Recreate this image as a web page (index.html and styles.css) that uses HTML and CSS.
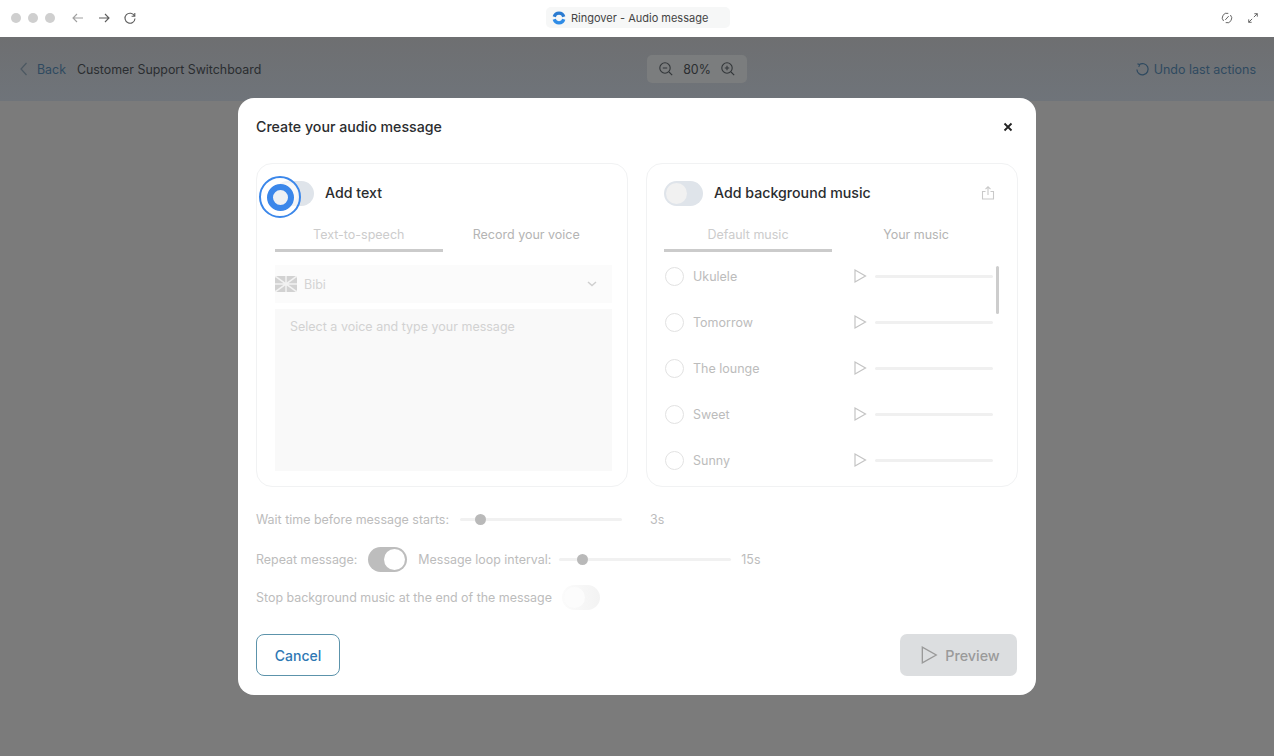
FILE: index.html
```html
<!DOCTYPE html>
<html lang="en">
<head>
    <meta charset="UTF-8">
    <meta name="viewport" content="width=device-width, initial-scale=1.0">
    <title>Ringover - Audio message</title>
    <link rel="stylesheet" href="styles.css">
</head>
<body>
    <!-- Window title bar -->
    <div class="titlebar">
        <div class="window-controls">
            <span class="dot"></span><span class="dot"></span><span class="dot"></span>
            <svg class="nav-icon faint" viewBox="0 0 14 14"><path d="M12 7H2M6 3 2 7l4 4"/></svg>
            <svg class="nav-icon" viewBox="0 0 14 14"><path d="M2 7h10M8 3l4 4-4 4"/></svg>
            <svg class="nav-icon" viewBox="0 0 14 14"><path d="M11.500 5A5 5 0 1 0 12 7.500M11.800 2v3.200H8.600"/></svg>
        </div>
        <div class="tab-pill">
            <svg class="app-logo" viewBox="0 0 14 14">
                <path class="logo-dark" d="M2.200 5.800A5 5 0 0 1 11.800 5.800"/>
                <path class="logo-light" d="M2.200 8.200A5 5 0 0 0 11.800 8.200"/>
            </svg>
            <span>Ringover - Audio message</span>
        </div>
        <div class="window-actions">
            <svg class="nav-icon" viewBox="0 0 14 14"><path d="M8.500 1.600A5.400 5.400 0 0 0 3 10.500M5.500 12.400A5.400 5.400 0 0 0 11 3.500M9 4.800 5 9.200"/></svg>
            <svg class="nav-icon" viewBox="0 0 14 14"><path d="M8 6l4-4M8.600 2H12v3.400M6 8l-4 4M2 8.600V12h3.400"/></svg>
        </div>
    </div>

    <div class="app">
        <!-- Page header behind the dialog -->
        <header class="page-header">
            <div class="header-left">
                <svg class="back-icon" viewBox="0 0 10 16"><path d="M7.500 2 2 8l5.500 6"/></svg>
                <span class="back-link">Back</span>
                <span class="page-title">Customer Support Switchboard</span>
            </div>
            <div class="zoom-box">
                <svg class="zoom-icon" viewBox="0 0 16 16"><circle cx="7" cy="7" r="5.200"/><path d="M4.800 7h4.400M11 11l3.200 3.200"/></svg>
                <span>80%</span>
                <svg class="zoom-icon" viewBox="0 0 16 16"><circle cx="7" cy="7" r="5.200"/><path d="M4.800 7h4.400M7 4.800v4.400M11 11l3.200 3.200"/></svg>
            </div>
            <div class="undo-link">
                <svg class="undo-icon" viewBox="0 0 16 16"><path d="M4.500 2.800A6 6 0 1 1 2 8M2.600 1.800l2.400 1-1 2.400"/></svg>
                <span>Undo last actions</span>
            </div>
        </header>

        <!-- Audio message dialog -->
        <div class="overlay">
            <div class="modal">
                <div class="modal-head">
                    <h2>Create your audio message</h2>
                    <svg class="close-icon" viewBox="0 0 10 10"><path d="M1.500 1.500l7 7M8.500 1.500l-7 7"/></svg>
                </div>

                <div class="panels">
                    <section class="panel panel-text">
                        <div class="panel-head">
                            <span class="toggle toggle-blue"><span class="knob"></span></span>
                            <span class="panel-label">Add text</span>
                            <span class="focus-ring"><span class="focus-core"></span></span>
                        </div>
                        <div class="tabs">
                            <span class="tab active">Text-to-speech</span>
                            <span class="tab">Record your voice</span>
                        </div>
                        <div class="voice-select">
                            <svg class="flag" viewBox="0 0 22 16"><rect width="22" height="16" rx="2" fill="#d2d2d2"/><path d="M0 8h22M11 0v16M0 0l22 16M22 0 0 16" stroke="#f2f2f2" stroke-width="1.500"/></svg>
                            <span>Bibi</span>
                            <svg class="chevron" viewBox="0 0 10 6"><path d="M1 1l4 3.500L9 1"/></svg>
                        </div>
                        <div class="message-box">Select a voice and type your message</div>
                    </section>

                    <section class="panel">
                        <div class="panel-head">
                            <span class="toggle toggle-blue"><span class="knob"></span></span>
                            <span class="panel-label">Add background music</span>
                            <svg class="upload-icon" viewBox="0 0 16 16"><path d="M5.500 6.500H2.500v7.500h11V6.500h-3M8 10V1.800M5.500 4.200 8 1.800l2.500 2.400"/></svg>
                        </div>
                        <div class="tabs">
                            <span class="tab active">Default music</span>
                            <span class="tab">Your music</span>
                        </div>
                        <div class="music-list">
                            <div class="music-row">
                                <span class="radio"></span><span class="music-name">Ukulele</span>
                                <svg class="play-icon" viewBox="0 0 14 16"><path d="M2 2v12l10.500-6z"/></svg>
                                <span class="track"></span>
                            </div>
                            <div class="music-row">
                                <span class="radio"></span><span class="music-name">Tomorrow</span>
                                <svg class="play-icon" viewBox="0 0 14 16"><path d="M2 2v12l10.500-6z"/></svg>
                                <span class="track"></span>
                            </div>
                            <div class="music-row">
                                <span class="radio"></span><span class="music-name">The lounge</span>
                                <svg class="play-icon" viewBox="0 0 14 16"><path d="M2 2v12l10.500-6z"/></svg>
                                <span class="track"></span>
                            </div>
                            <div class="music-row">
                                <span class="radio"></span><span class="music-name">Sweet</span>
                                <svg class="play-icon" viewBox="0 0 14 16"><path d="M2 2v12l10.500-6z"/></svg>
                                <span class="track"></span>
                            </div>
                            <div class="music-row">
                                <span class="radio"></span><span class="music-name">Sunny</span>
                                <svg class="play-icon" viewBox="0 0 14 16"><path d="M2 2v12l10.500-6z"/></svg>
                                <span class="track"></span>
                            </div>
                            <span class="scrollbar"></span>
                        </div>
                    </section>
                </div>

                <div class="settings">
                    <div class="setting-row wait-row">
                        <span>Wait time before message starts:</span>
                        <span class="slider wait-slider"><span class="thumb"></span></span>
                        <span class="slider-value">3s</span>
                    </div>
                    <div class="setting-row repeat-row">
                        <span>Repeat message:</span>
                        <span class="toggle toggle-on"><span class="knob"></span></span>
                        <span>Message loop interval:</span>
                        <span class="slider loop-slider"><span class="thumb"></span></span>
                        <span class="slider-value">15s</span>
                    </div>
                    <div class="setting-row stop-row">
                        <span>Stop background music at the end of the message</span>
                        <span class="toggle toggle-ghost"><span class="knob"></span></span>
                    </div>
                </div>

                <div class="modal-foot">
                    <button class="btn-cancel">Cancel</button>
                    <button class="btn-preview">
                        <svg class="preview-icon" viewBox="0 0 16 18"><path d="M2 2v14l12.500-7z"/></svg>
                        Preview
                    </button>
                </div>
            </div>
        </div>
    </div>
</body>
</html>
```

FILE: styles.css
```css
* {
    margin: 0;
    padding: 0;
    box-sizing: border-box;
    font-family: 'Inter', 'Liberation Sans', sans-serif;
}

html, body {
    width: 1274px;
    height: 756px;
    overflow: hidden;
}

body {
    display: flex;
    flex-direction: column;
    background: #7b7b7b;
}

/* Window title bar */
.titlebar {
    height: 37px;
    flex-shrink: 0;
    background: white;
    display: flex;
    align-items: center;
    justify-content: space-between;
    padding: 0 15px 2px 11px;
    position: relative;
}

.window-controls, .window-actions {
    display: flex;
    align-items: center;
}

.dot {
    width: 10px;
    height: 10px;
    border-radius: 50%;
    background: #cfcfcf;
    margin-right: 7px;
}

.nav-icon {
    width: 14px;
    height: 14px;
    fill: none;
    stroke: #5d5d5d;
    stroke-width: 1.100;
    margin-left: 12px;
}

.window-controls .nav-icon:first-of-type {
    margin-left: 9px;
}

.window-actions .nav-icon {
    width: 12px;
    height: 12px;
    margin-left: 14px;
}

.nav-icon.faint {
    stroke: #a0a0a0;
}

.tab-pill {
    position: absolute;
    left: 546px;
    top: 7px;
    width: 184px;
    height: 21px;
    display: flex;
    align-items: center;
    gap: 5px;
    padding-left: 6px;
    border-radius: 5px;
    background: #f6f7f7;
    font-size: 11px;
    color: #444;
}

.app-logo {
    width: 14px;
    height: 14px;
    fill: none;
    stroke-width: 3.200;
}

.logo-dark {
    stroke: #2a7bd1;
}

.logo-light {
    stroke: #2f8ce6;
}

/* Page header behind the dialog */
.app {
    flex: 1;
    position: relative;
}

.page-header {
    height: 64px;
    background: linear-gradient(#6e6f71, #6f747a);
    display: flex;
    align-items: center;
    justify-content: space-between;
    padding: 0 18px 0 19px;
    position: relative;
    font-size: 12.400px;
}

.header-left {
    display: flex;
    align-items: center;
}

.back-icon {
    width: 10px;
    height: 16px;
    fill: none;
    stroke: #4c5862;
    stroke-width: 1.200;
    margin-right: 8px;
}

.back-link {
    color: #2f4a60;
    margin-right: 11px;
}

.page-title {
    color: #2a2d30;
}

.zoom-box {
    position: absolute;
    left: 647px;
    top: 18px;
    width: 100px;
    height: 28px;
    display: flex;
    align-items: center;
    justify-content: center;
    gap: 9px;
    border-radius: 5px;
    background: #7b7d7e;
    color: #2a2d30;
}

.zoom-icon {
    width: 16px;
    height: 16px;
    fill: none;
    stroke: #33373a;
    stroke-width: 1.100;
}

.undo-link {
    display: flex;
    align-items: center;
    gap: 4px;
    color: #2f4a60;
    font-size: 12.500px;
}

.undo-icon {
    width: 15px;
    height: 15px;
    fill: none;
    stroke: #2f4a60;
    stroke-width: 1.300;
}

/* Dialog */
.overlay {
    position: absolute;
    inset: 0;
    display: flex;
    align-items: center;
    justify-content: center;
}

.modal {
    width: 798px;
    height: 597px;
    background: white;
    border-radius: 16px;
    padding: 18px;
    display: flex;
    flex-direction: column;
}

.modal-head {
    display: flex;
    align-items: center;
    justify-content: space-between;
    height: 22px;
    margin-bottom: 25px;
}

.modal-head h2 {
    font-size: 14.200px;
    font-weight: 500;
    color: #2b2d2f;
    margin-bottom: 2px;
}

.close-icon {
    width: 10px;
    height: 10px;
    margin-right: 5px;
    fill: none;
    stroke: #222;
    stroke-width: 1.800;
}

.panels {
    display: flex;
    gap: 18px;
}

.panel {
    width: 372px;
    height: 324px;
    border: 1px solid #f1f2f3;
    border-radius: 16px;
    padding: 17px 17px 0;
    overflow: hidden;
}

.panel-text {
    padding-left: 18px;
}

.panel-head {
    display: flex;
    align-items: center;
    gap: 11px;
    height: 25px;
    position: relative;
}

.panel-label {
    font-size: 14.200px;
    font-weight: 500;
    color: #2b2d2f;
    margin-bottom: 2px;
}

.toggle {
    width: 39px;
    height: 25px;
    border-radius: 13px;
    flex-shrink: 0;
    padding: 2px;
    display: flex;
}

.knob {
    width: 21px;
    height: 21px;
    border-radius: 50%;
    background: #f1f1f1;
}

.toggle-blue {
    background: #dfe4ea;
}

.toggle-on {
    background: #bdbdbd;
    justify-content: flex-end;
}

.toggle-on .knob {
    background: white;
}

.toggle-ghost {
    width: 38px;
    background: linear-gradient(90deg, #fbfbfb, #f3f3f3);
}

.toggle-ghost .knob {
    background: #fcfcfc;
}

.focus-ring {
    position: absolute;
    left: -16px;
    top: -5px;
    width: 42px;
    height: 42px;
    border-radius: 50%;
    border: 2px solid #3b87ea;
    background: rgba(255,255,255,0.55);
    display: flex;
    align-items: center;
    justify-content: center;
}

.focus-core {
    width: 27px;
    height: 27px;
    border-radius: 50%;
    border: 6px solid #3b87ea;
    background: #eef1f4;
}

.upload-icon {
    width: 16px;
    height: 16px;
    margin-left: auto;
    margin-right: 4px;
    margin-bottom: 2px;
    fill: none;
    stroke: #c9c9c9;
    stroke-width: 1.100;
}

.tabs {
    display: flex;
    margin-top: 17px;
}

.tab {
    width: 168px;
    height: 29px;
    padding-top: 4px;
    text-align: center;
    font-size: 12.500px;
    color: #b4b4b4;
}

.tab.active {
    border-bottom: 3px solid #cbcbcb;
    color: #cccccc;
}

/* Text side */
.voice-select {
    display: flex;
    align-items: center;
    gap: 7px;
    height: 38px;
    width: 337px;
    margin-top: 13px;
    background: #fbfbfb;
    font-size: 12.500px;
    color: #d4d4d4;
}

.flag {
    width: 22px;
    height: 16px;
}

.chevron {
    width: 10px;
    height: 6px;
    margin-left: auto;
    margin-right: 15px;
    fill: none;
    stroke: #cfcfcf;
    stroke-width: 1.500;
}

.message-box {
    width: 337px;
    height: 162px;
    margin-top: 6px;
    padding: 10px 15px;
    background: #f9f9f9;
    font-size: 12.500px;
    color: #d2d2d2;
}

/* Music side */
.music-list {
    position: relative;
    margin-top: 1px;
}

.music-row {
    height: 46px;
    display: flex;
    align-items: center;
    font-size: 12.500px;
    color: #bcbcbc;
}

.radio {
    width: 19px;
    height: 19px;
    border-radius: 50%;
    border: 1.500px solid #e2e2e2;
    margin-left: 1px;
    margin-right: 9px;
}

.music-name {
    width: 160px;
}

.play-icon {
    width: 14px;
    height: 16px;
    fill: none;
    stroke: #c4c4c4;
    stroke-width: 1.200;
}

.track {
    width: 118px;
    height: 3px;
    margin-left: 8px;
    background: #f0f0f0;
    border-radius: 2px;
}

.scrollbar {
    position: absolute;
    left: 332px;
    top: 13px;
    width: 3px;
    height: 48px;
    border-radius: 2px;
    background: #cdcdcd;
}

/* Settings rows */
.settings {
    margin-top: 17px;
    font-size: 12.450px;
    color: #bcbcbc;
}

.setting-row {
    display: flex;
    align-items: center;
}

.wait-row {
    height: 30px;
}

.repeat-row {
    height: 25px;
    margin-top: 13px;
    gap: 11px;
}

.stop-row {
    height: 25px;
    margin-top: 13px;
    gap: 10px;
}

.slider {
    height: 3px;
    background: #f1f1f1;
    border-radius: 2px;
    position: relative;
    display: block;
}

.thumb {
    position: absolute;
    top: -4px;
    width: 11px;
    height: 11px;
    border-radius: 50%;
    background: #b9b9b9;
}

.wait-slider {
    width: 162px;
    margin-left: 11px;
}

.wait-slider .thumb {
    left: 15px;
}

.wait-row .slider-value {
    margin-left: 28px;
}

.loop-slider {
    width: 172px;
    margin-left: -3px;
}

.loop-slider .thumb {
    left: 18px;
}

.repeat-row .slider-value {
    margin-left: -1px;
}

/* Footer */
.modal-foot {
    display: flex;
    justify-content: space-between;
    margin-top: 24px;
}

.btn-cancel {
    width: 84px;
    height: 42px;
    background: white;
    border: 1px solid #5c93ab;
    border-radius: 8px;
    font-size: 14px;
    font-weight: 500;
    color: #2f78b4;
}

.btn-preview {
    width: 117px;
    height: 42px;
    margin-right: 1px;
    padding-left: 3px;
    background: #dcdee0;
    border: none;
    border-radius: 7px;
    font-size: 14.300px;
    font-weight: 500;
    color: #9a9a9a;
    display: flex;
    align-items: center;
    justify-content: center;
    gap: 7px;
}

.preview-icon {
    width: 18px;
    height: 20px;
    fill: none;
    stroke: #9a9a9a;
    stroke-width: 1.200;
}
```
